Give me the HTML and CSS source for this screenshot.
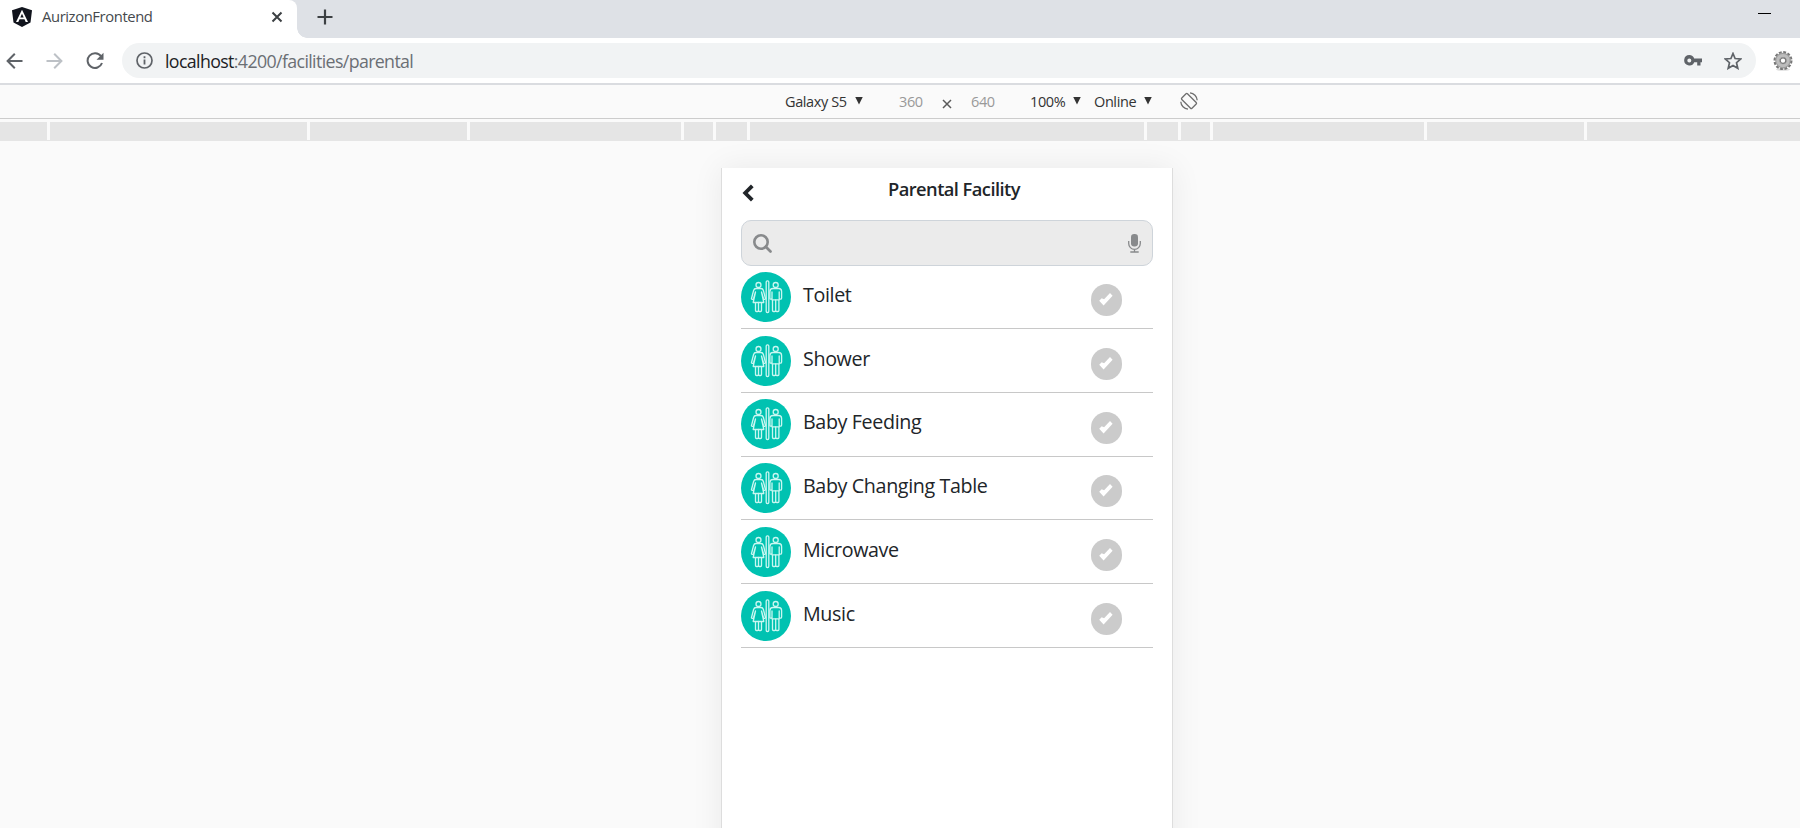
FILE: index.html
```
<!DOCTYPE html>
<html lang="en">
<head>
<meta charset="utf-8">
<title>AurizonFrontend</title>
<link rel="stylesheet" href="styles.css">
</head>
<body>
<svg class="defs" aria-hidden="true">
  <symbol id="restroom" viewBox="0 0 50 50">
    <circle cx="25" cy="25" r="25" fill="#00c2b1"/>
    <g fill="none" stroke="#c9f7f1" stroke-width="1.300" stroke-linejoin="round">
      <circle cx="17.500" cy="13" r="2.500"/>
      <path d="M15 16.500h5c1.500 0 2 .6 2.400 2l2.100 8c0 1-1.600 1.200-2 .3L20.500 20l2.300 10.500H12.200L14.500 20l-2 6.800c-.5 1-2.200.7-2-.3l2.100-8c.4-1.400.9-2 2.400-2z"/>
      <path d="M14.500 30.500v8q0 1 1 1h1q1 0 1-1v-8 8q0 1 1 1h1q1 0 1-1v-8"/>
      <rect x="25.200" y="8.800" width="2.600" height="31.700" rx="1.200"/>
      <circle cx="34.700" cy="13" r="2.500"/>
      <path d="M32 16.500h5.600q3 0 3 3v6.500q0 1.200-1.200 1.200t-1.200-1.200v-6 7.800h-7.200V20v6q0 1.200-1.200 1.200T28.900 26v-6.500q0-3 3.100-3z"/>
      <path d="M31.500 28v10.500q0 1 1 1h1.200q1 0 1-1V28v10.500q0 1 1 1h1.200q1 0 1-1V28"/>
    </g>
  </symbol>
  <symbol id="check" viewBox="0 0 31 32">
    <rect width="31" height="32" rx="15.500" fill="#cbcbcb"/>
    <path d="M8.200 16.800l2.500-2.600 2.400 1L19 9l2.600 2.700-9 9.800z" fill="#fff"/>
  </symbol>
</svg>

<div class="tabstrip">
  <div class="tab">
    <svg class="tab-logo" width="20" height="20" viewBox="0 0 20 20"><path d="M10 0l10 3.300-1.500 12.300L10 20l-8.500-4.400L0 3.300z" fill="#11141d"/><path d="M10 2.800L4 15h2.300l1.200-2.700h5L13.700 15H16zM10 6.800l1.700 3.700H8.300z" fill="#fff" fill-rule="evenodd"/></svg>
    <span class="tab-title">AurizonFrontend</span>
    <svg class="tab-close" width="12" height="12" viewBox="0 0 12 12"><path d="M1.500 1.500l9 9M10.500 1.500l-9 9" stroke="#3c4043" stroke-width="2"/></svg>
  </div>
  <div class="tab-curve"></div>
  <svg class="new-tab" width="16" height="16" viewBox="0 0 16 16"><path d="M8 .5v15M.5 8h15" stroke="#3c4043" stroke-width="2.200"/></svg>
  <div class="minimize"></div>
</div>

<div class="toolbar">
  <svg class="back" width="17" height="16" viewBox="0 0 17 16"><path d="M16.500 8H2M8.800.8L1.600 8l7.200 7.200" fill="none" stroke="#5f6368" stroke-width="2"/></svg>
  <svg class="forward" width="17" height="16" viewBox="0 0 17 16"><path d="M.5 8H15M8.200.8L15.400 8l-7.200 7.200" fill="none" stroke="#bdc1c6" stroke-width="2"/></svg>
  <svg class="reload" width="18" height="18" viewBox="0 0 18 18"><path d="M15 4.200A7.400 7.400 0 1 0 16 11" fill="none" stroke="#5f6368" stroke-width="2"/><path d="M17.500.8v7h-7z" fill="#5f6368"/></svg>
  <div class="omnibox">
    <svg width="17" height="17" viewBox="0 0 17 17"><circle cx="8.500" cy="8.500" r="7.500" fill="none" stroke="#5f6368" stroke-width="1.700"/><path d="M8.500 7.500v5M8.500 4.300v1.900" stroke="#5f6368" stroke-width="1.800"/></svg>
    <span class="url"><b>localhost</b>:4200/facilities/parental</span>
    <svg class="key" width="18" height="11" viewBox="0 0 18 11"><path d="M5.300 0a5.200 5.200 0 1 0 4.900 7.200h3V10.500h3.300V7.200H18V3.600h-7.800A5.200 5.200 0 0 0 5.300 0zm0 3.400a2 2 0 1 1 0 4 2 2 0 0 1 0-4z" fill="#5f6368" fill-rule="evenodd"/></svg>
    <svg class="star" width="18" height="18" viewBox="0 0 18 18"><path d="M9 1.500l2.100 5 5.600.5-4.200 3.700 1.300 5.600L9 13.400l-4.800 2.900 1.300-5.600L1.300 7l5.600-.5z" fill="none" stroke="#5f6368" stroke-width="1.700"/></svg>
  </div>
  <svg class="gear" width="20" height="20" viewBox="0 0 20 20"><ellipse cx="10" cy="18.500" rx="7" ry="1.300" fill="#ddd"/><circle cx="10" cy="9.600" r="8.300" fill="none" stroke="#777" stroke-width="2.400" stroke-dasharray="2.800 1.545"/><circle cx="10" cy="9.600" r="5.500" fill="none" stroke="#9c9c9c" stroke-width="4.600"/><circle cx="10" cy="9.600" r="5.200" fill="none" stroke="#bdbdbd" stroke-width="3"/><circle cx="10" cy="9.600" r="2.800" fill="#fff" stroke="#777" stroke-width="1.200"/></svg>
</div>

<div class="device-bar">
  <span class="device">Galaxy S5</span><i class="caret"></i>
  <span class="dim width">360</span>
  <svg class="times" width="10" height="10" viewBox="0 0 10 10"><path d="M1 1l8 8M9 1L1 9" stroke="#5a5a5a" stroke-width="1.500"/></svg>
  <span class="dim height">640</span>
  <span class="zoom">100%</span><i class="caret"></i>
  <span class="network">Online</span><i class="caret"></i>
  <svg class="rotate" width="18" height="18" viewBox="0 0 18 18"><g fill="none" stroke="#6e6e6e" stroke-width="1.300"><rect x="5" y="1.800" width="8" height="14.400" rx="1" transform="rotate(-45 9 9)"/><path d="M10 .8a8 8 0 0 1 7.200 7.500M8 17.200A8 8 0 0 1 .8 9.700"/></g></svg>
</div>

<div class="media-bar"><i></i><i></i><i></i><i></i><i></i><i></i><i></i><i></i><i></i><i></i><i></i><i></i></div>

<main class="stage">
  <section class="phone">
    <header class="page-head">
      <svg width="12" height="18" viewBox="0 0 12 18"><path d="M10.300 1.900L3.200 9l7.100 7.100" fill="none" stroke="#212529" stroke-width="3.800"/></svg>
      <h1>Parental Facility</h1>
    </header>
    <div class="search">
      <svg width="19" height="19" viewBox="0 0 19 19"><circle cx="8" cy="8" r="6.700" fill="none" stroke="#888a8c" stroke-width="2.600"/><path d="M12.800 12.800l4.700 4.700" stroke="#888a8c" stroke-width="2.700" stroke-linecap="round"/></svg>
      <svg width="13" height="19" viewBox="0 0 13 19"><rect x="3" y="0" width="7" height="12.500" rx="3.200" fill="#888a8c"/><path d="M.7 7v2.500a5.800 5.800 0 0 0 11.600 0V7M6.500 15.300v2.500M2.300 18h8.400" fill="none" stroke="#888a8c" stroke-width="1.300"/></svg>
    </div>
    <ul class="list">
      <li><svg class="pic"><use href="#restroom"/></svg><span>Toilet</span><svg class="tick"><use href="#check"/></svg></li>
      <li><svg class="pic"><use href="#restroom"/></svg><span>Shower</span><svg class="tick"><use href="#check"/></svg></li>
      <li><svg class="pic"><use href="#restroom"/></svg><span>Baby Feeding</span><svg class="tick"><use href="#check"/></svg></li>
      <li><svg class="pic"><use href="#restroom"/></svg><span>Baby Changing Table</span><svg class="tick"><use href="#check"/></svg></li>
      <li><svg class="pic"><use href="#restroom"/></svg><span>Microwave</span><svg class="tick"><use href="#check"/></svg></li>
      <li><svg class="pic"><use href="#restroom"/></svg><span>Music</span><svg class="tick"><use href="#check"/></svg></li>
    </ul>
  </section>
</main>
</body>
</html>
```
FILE: styles.css
```
* { box-sizing: border-box; }
body {
  margin: 0;
  height: 828px;
  overflow: hidden;
  display: flex;
  flex-direction: column;
  background: #fafafa;
  font-family: "Open Sans", "Noto Sans", sans-serif;
  color: #212529;
}
svg { display: block; flex: none; }
.defs { display: none; }

.tabstrip { display: flex; flex: none; height: 38px; background: #dee1e6; }
.tab { display: flex; align-items: center; width: 297px; height: 38px; padding: 0 14px 4px 12px; background: #fff; border-top-right-radius: 8px; }
.tab-title { margin: -2px 0 0 10px; flex: 1; font-size: 14.800px; letter-spacing: -0.400px; color: #45494d; }
.tab-curve { width: 10px; background: radial-gradient(circle at 100% 0, #dee1e6 9.500px, #fff 10px) left bottom / 10px 10px no-repeat; }
.new-tab { margin: 9px 0 0 10px; }
.minimize { width: 13px; height: 1px; margin: 13px 29px 0 auto; background: #000; }

.toolbar { display: flex; flex: none; align-items: center; height: 47px; padding: 0 7px 0 6px; background: #fff; border-bottom: 2px solid #dadce0; }
.forward { margin-left: 23px; }
.reload { margin-left: 23px; }
.omnibox { display: flex; align-items: center; width: 1634px; height: 35px; margin-left: 18px; padding: 0 14px; border-radius: 18px; background: #f1f3f4; }
.url { flex: 1; margin-left: 12px; font-size: 17.800px; letter-spacing: -0.630px; color: #6b6f74; }
.url b { font-weight: 400; color: #202124; }
.star { margin-left: 22px; }
.gear { margin-left: 17px; }

.device-bar { display: flex; flex: none; align-items: center; height: 34px; padding: 0 0 1px 785px; border-bottom: 1px solid #ccc; font-size: 14.500px; letter-spacing: -0.400px; white-space: nowrap; color: #333; }
.caret { width: 8px; height: 8px; margin-top: -1px; background: #333; clip-path: polygon(0 0, 100% 0, 50% 100%); }
.device { width: 70px; }
.dim { width: 25px; color: #999; }
.width { margin-left: 36px; }
.times { margin: 5px 19px 0 18px; }
.zoom { width: 43px; margin-left: 34px; }
.network { width: 50px; margin-left: 13px; }
.rotate { margin-left: 28px; }

.media-bar { display: grid; flex: none; grid-template-columns: 47px 257px 157px 211px 29px 31px 394px 31px 29px 211px 157px 1fr; gap: 3px; height: 19px; margin-top: 3px; border-bottom: 1px solid #e5e5e5; }
.media-bar i { background: #e5e5e5; }

.stage { flex: 1; padding: 27px 0 0 721px; }
.phone { width: 452px; height: 700px; padding: 0 19px; background: #fff; border: solid #ddd; border-width: 0 1px; box-shadow: 0 0 30px rgba(0, 0, 0, .07); }
.page-head { display: flex; align-items: flex-start; height: 52px; padding: 16px 0 0 1px; }
h1 { margin: -8px 0 0 134px; font-size: 18.300px; line-height: 26px; font-weight: 600; letter-spacing: -0.550px; white-space: nowrap; }
.search { display: flex; align-items: center; justify-content: space-between; height: 46px; padding: 0 11px; background: #ebebeb; border: 1px solid #ced4da; border-radius: 10px; }
.list { margin: 0; padding: 0; list-style: none; }
.list li { display: flex; align-items: flex-start; height: 63.750px; padding-top: 6.600px; border-bottom: 1px solid #c8c8c8; }
.list li:first-child { height: 63px; padding-top: 6px; }
.pic { width: 50px; height: 50px; }
.list span { flex: 1; margin: 9px 0 0 12px; font-size: 19.700px; line-height: 28px; letter-spacing: -0.370px; }
.tick { width: 31px; height: 32px; margin: 12.400px 31px 0 0; }
```
